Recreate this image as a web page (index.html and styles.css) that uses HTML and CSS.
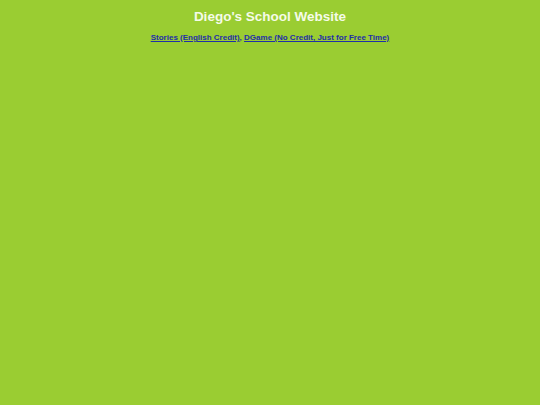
FILE: index.html
```html
<!DOCTYPE html>
<html>
<head>
<meta charset="utf-8">
<link rel="stylesheet" href="styles.css">
</head>
<body>
<h1 class="title">Diego's School Website</h1>
<p class="links"><a href="#">Stories (English Credit)</a>, <a href="#">DGame (No Credit, Just for Free Time)</a></p>
</body>
</html>
```
FILE: styles.css
```css
html, body {
  margin: 0;
  padding: 0;
  background: #9acd32;
  font-family: "Liberation Sans", Arial, sans-serif;
  height: 100%;
}
.title {
  margin: 0;
  padding-top: 9px;
  text-align: center;
  color: #f5fbe8;
  font-size: 13.5px;
  font-weight: bold;
  line-height: 16px;
}
.links {
  margin: 8px 0 0;
  text-align: center;
  font-size: 8px;
  line-height: 10px;
  font-weight: bold;
  color: #1f2fa8;
}
.links a {
  color: #1f2fa8;
}
```
